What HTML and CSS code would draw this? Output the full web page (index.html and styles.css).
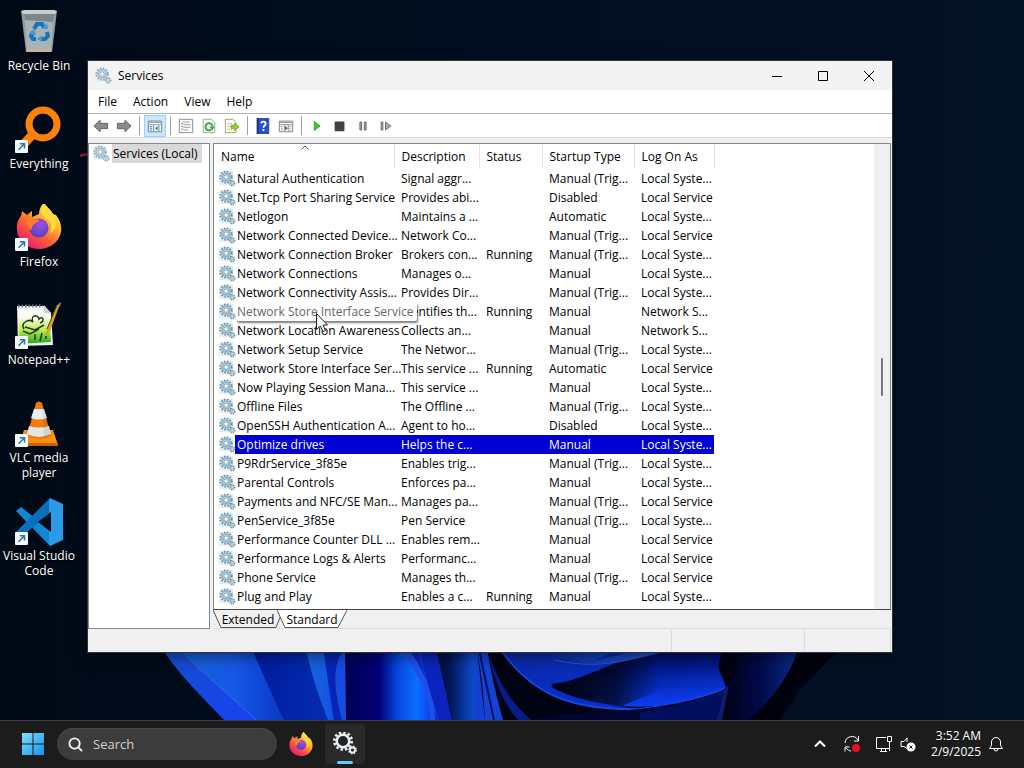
FILE: index.html
```html
<!DOCTYPE html>
<html lang="en">
<head>
    <meta charset="UTF-8">
    <meta name="viewport" content="width=device-width, initial-scale=1.0">
    <title>Services</title>
    <link rel="stylesheet" href="styles.css">
</head>
<body>
    <!-- Shared icons -->
    <svg class="defs" aria-hidden="true">
        <symbol id="gear" viewBox="0 0 18 18">
            <rect x="0" y="1" width="15" height="15" fill="#e3eff5"/>
            <circle cx="7.5" cy="7.5" r="6" fill="none" stroke="#6a8da1" stroke-width="2" stroke-dasharray="1.7 1.45"/>
            <circle cx="7.5" cy="7.5" r="4.2" fill="#cfe3ef" stroke="#93b6c9" stroke-width="2"/>
            <circle cx="7.5" cy="7.5" r="2.4" fill="#f6fbfd" stroke="#66899c" stroke-width=".8"/>
            <circle cx="14" cy="14" r="2.6" fill="#dceaf1" stroke="#6a8da1" stroke-width="1.6" stroke-dasharray="1.3 .9"/>
            <circle cx="14" cy="14" r="1.2" fill="#fff" stroke="#7497aa" stroke-width=".8"/>
        </symbol>
        <symbol id="shortcut" viewBox="0 0 13 13">
            <rect width="13" height="13" rx="1" fill="#f5f9fc"/>
            <path d="M3.5 9.8 9 4.2M4.8 3.7h4.7v4.7" fill="none" stroke="#2a76ae" stroke-width="1.5"/>
        </symbol>
        <symbol id="firefox" viewBox="0 0 46 46">
            <defs>
                <linearGradient id="fx1" x1=".85" y1=".05" x2=".2" y2=".95">
                    <stop offset="0" stop-color="#fff44f"/>
                    <stop offset=".35" stop-color="#ffb02e"/>
                    <stop offset=".65" stop-color="#ff5a36"/>
                    <stop offset="1" stop-color="#e5177b"/>
                </linearGradient>
                <radialGradient id="fx2" cx=".6" cy=".3" r=".8">
                    <stop offset="0" stop-color="#a04ee8"/>
                    <stop offset="1" stop-color="#4a3fb8"/>
                </radialGradient>
            </defs>
            <path d="M28 0c2 3 7 7 9 11l3 1c4 5 6 11 5 17-2 10-11 17-22 17S2 39 1 28c-1-6 1-12 4-15l1-5 5 4c2-1 3-3 5-4v6l7-3c0-4 2-9 5-11z" fill="url(#fx1)"/>
            <circle cx="23" cy="25" r="9.500" fill="url(#fx2)"/>
            <path d="M5 13l6-1c3 0 5 2 7 4l5 1c-1 3-4 3-6 5-1 2-2 3-1 5-4-1-6-4-5-10z" fill="#ff7a2b"/>
            <path d="M28 0c-5 6-3 11 2 15 5 3 7 9 4 15 6-2 8-10 3-19-2-4-7-7-9-11z" fill="#ffdc3e"/>
        </symbol>
    </svg>

    <main class="desktop">
        <!-- Wallpaper bloom -->
        <svg class="wallpaper" viewBox="0 640 1024 80" preserveAspectRatio="none" aria-hidden="true">
            <defs>
                <linearGradient id="w1" x1="0" y1="0" x2="1" y2="1"><stop offset="0" stop-color="#1450c8"/><stop offset="1" stop-color="#1940f2"/></linearGradient>
                <linearGradient id="w2" x1="0" y1="0" x2="1" y2="0"><stop offset="0" stop-color="#1468d2"/><stop offset=".55" stop-color="#1657e6"/><stop offset="1" stop-color="#0a35c0"/></linearGradient>
                <linearGradient id="w3" x1="0" y1="0" x2="1" y2="0"><stop offset="0" stop-color="#001a9c"/><stop offset="1" stop-color="#052db0"/></linearGradient>
                <linearGradient id="w4" x1="0" y1="0" x2="1" y2="0"><stop offset="0" stop-color="#000052"/><stop offset=".4" stop-color="#000078"/><stop offset=".62" stop-color="#0648e0"/><stop offset=".85" stop-color="#0a70ff"/><stop offset="1" stop-color="#1040f0"/></linearGradient>
                <linearGradient id="w5" x1="0" y1="0" x2="1" y2="0"><stop offset="0" stop-color="#000934"/><stop offset=".3" stop-color="#001552"/><stop offset=".75" stop-color="#0d49ca"/><stop offset="1" stop-color="#163bd8"/></linearGradient>
                <linearGradient id="w6" x1="0" y1="0" x2=".3" y2="1"><stop offset="0" stop-color="#0b2a9c"/><stop offset="1" stop-color="#0a2ccc"/></linearGradient>
                <linearGradient id="w7" x1=".2" y1="0" x2=".4" y2="1"><stop offset="0" stop-color="#00042c"/><stop offset=".4" stop-color="#001478"/><stop offset="1" stop-color="#0c3cf0"/></linearGradient>
                <linearGradient id="w8" x1="0" y1="0" x2="1" y2="0"><stop offset="0" stop-color="#00020f"/><stop offset=".5" stop-color="#000a4a"/><stop offset="1" stop-color="#0b2c86"/></linearGradient>
                <linearGradient id="w9" x1="0" y1="0" x2="1" y2="0"><stop offset="0" stop-color="#0d2a9e"/><stop offset="1" stop-color="#1a5ad8"/></linearGradient>
                <linearGradient id="w10" x1="0" y1="0" x2="1" y2="0"><stop offset="0" stop-color="#00020c"/><stop offset=".6" stop-color="#00020c" stop-opacity=".7"/><stop offset="1" stop-color="#00020c" stop-opacity="0"/></linearGradient>
            </defs>
            <path d="M158 640 225 720H780L800 690 848 640z" fill="#000314"/>
            <path d="M155 640 165 653C180 675 200 695 224 720H262L185 640z" fill="url(#w1)"/>
            <path d="M172 640C205 675 230 695 256 720H288L250 640z" fill="url(#w2)"/>
            <path d="M248 640C262 672 272 695 284 720H330L308 640z" fill="url(#w3)"/>
            <path d="M174 643C205 676 230 695 256 720" fill="none" stroke="#2f6cf0"/>
            <path d="M304 640C310 670 318 695 328 720H347V640z" fill="url(#w2)"/>
            <path d="M322 640 326 668 334 720H350L346 640z" fill="#0724b4"/>
            <path d="M342 652C333 668 333 685 342 720H349L346 645z" fill="#164be0"/>
            <path d="M345 640 346 720H430C430 690 415 660 390 640z" fill="url(#w4)"/>
            <path d="M384 640C418 666 428 690 430 720H436C434 690 420 660 402 640z" fill="#1c50ee"/>
            <path d="M400 640C422 662 433 690 436 720H452L438 640z" fill="#0a23bc"/>
            <path d="M415 640 438 720" fill="none" stroke="#1744e4"/>
            <path d="M434 640 452 720H485L476 640z" fill="url(#w5)"/>
            <path d="M474 640C482 668 483 692 485 720H503C495 690 490 670 486 640z" fill="#1343d2"/>
            <path d="M477 640 494 720" fill="none" stroke="#000d64" stroke-width="2"/>
            <path d="M489 655C502 690 515 706 531 720H518C504 704 494 682 489 655z" fill="#091b86"/>
            <path d="M503 653C530 690 565 711 638 709 610 706 565 695 551 684 590 680 620 660 655 647L545 640z" fill="url(#w6)"/>
            <path d="M551 686C580 679 612 665 650 648L725 640 718 667 726 687C695 702 662 709 622 706 590 703 560 694 551 686z" fill="url(#w7)"/>
            <path d="M551 686C580 679 612 665 650 648L660 690 622 706C590 703 560 694 551 686z" fill="url(#w10)"/>
            <path d="M545 652C575 666 605 669 670 650L640 649C625 654 610 657 590 662L618 650z" fill="url(#w9)"/>
            <path d="M503 653C530 690 565 711 640 709 675 706 700 699 726 688" fill="none" stroke="#1b46dd" stroke-width="2"/>
            <path d="M555 660C590 668 620 665 670 648" fill="none" stroke="#2457d6"/>
            <path d="M575 713C630 712 690 705 725 689L716 720H530z" fill="#00062f"/>
            <path d="M640 712C680 707 705 698 725 689L716 720H640z" fill="#00105e"/>
            <path d="M724 688C722 701 719 712 716 720H722L729 686z" fill="#101a70"/>
            <path d="M729 686 745 640H798C797 672 776 698 748 720H722z" fill="url(#w8)"/>
            <path d="M798 650C790 676 770 702 748 720H778L795 685 835 652z" fill="#00020c"/>
        </svg>

        <nav class="shortcuts" aria-label="Desktop">
            <a class="shortcut" href="#">
                <svg viewBox="0 0 48 48">
                    <path d="M6 3H42L37 44H11z" fill="#8f999f"/>
                    <path d="M9 6H39L36 43H12z" fill="#abb2b6"/>
                    <path d="M9 6H39L38 14 10 12z" fill="#7e868b"/>
                    <path d="M6 3 9 2H39L42 3 40 6H8z" fill="#c9ced1"/>
                    <path d="M11 41H37L36 44H12z" fill="#c9b0a7"/>
                    <g fill="none" stroke="#1773bd" stroke-width="4">
                        <path d="M19 21 22 16H27L29 20"/>
                        <path d="M32 24 33 28 30 31H27"/>
                        <path d="M21 31H18L16 28 18 24"/>
                    </g>
                    <path d="M26 21H33L32 15zM27 27V34L22 31zM14 26 19 21 21 27z" fill="#3f98d8"/>
                </svg>
                <span>Recycle Bin</span>
            </a>
            <a class="shortcut" href="#">
                <svg viewBox="0 0 48 48">
                    <circle cx="28" cy="18" r="14" fill="none" stroke="#ff8208" stroke-width="7"/>
                    <path d="M19 27 7 40" stroke="#ff8208" stroke-width="9"/>
                    <use href="#shortcut" x="0" y="34" width="13" height="13"/>
                </svg>
                <span>Everything</span>
            </a>
            <a class="shortcut" href="#">
                <svg viewBox="0 0 48 48">
                    <use href="#firefox" x="1" y="-1" width="46" height="46"/>
                    <use href="#shortcut" x="0" y="34" width="13" height="13"/>
                </svg>
                <span>Firefox</span>
            </a>
            <a class="shortcut" href="#">
                <svg viewBox="0 0 48 48">
                    <defs><linearGradient id="np" x1="0" y1="0" x2="0" y2="1"><stop offset=".2" stop-color="#fafdf4"/><stop offset=".6" stop-color="#b9ec4c"/><stop offset="1" stop-color="#1fa51b"/></linearGradient></defs>
                    <path d="M2 4H29L36 11 38 43 3 44z" fill="#f4f6f5"/>
                    <path d="M3 8H29L35 14 36 40 4 42z" fill="url(#np)"/>
                    <path d="M3 4H28" stroke="#667a83" stroke-width="3" stroke-dasharray="1.500 2"/>
                    <path d="M29 3V11H36z" fill="#c7d1d5"/>
                    <path d="M9 27C5 21 14 16 18 20 15 13 23 12 24 17 27 13 31 19 25 21M10 25 20 28 29 23M8 29 15 32 24 27M20 38V32M25 39 27 31M31 37V34" fill="none" stroke="#24361a" stroke-width="1.500"/>
                    <circle cx="20" cy="17" r="2" fill="#fff"/>
                    <path d="M45 2 35 29 31 34 32 27 42 3z" fill="#d6a21f"/>
                    <path d="M42 3 32 27" stroke="#52450b" stroke-width="1"/>
                    <path d="M43 2 46 0 45 5z" fill="#9c7783"/>
                    <use href="#shortcut" x="0" y="34" width="13" height="13"/>
                </svg>
                <span>Notepad++</span>
            </a>
            <a class="shortcut" href="#">
                <svg viewBox="0 0 48 48">
                    <path d="M9 30H38L43 45H4z" fill="#f59112"/>
                    <path d="M4 43H43V46H4z" fill="#c96205"/>
                    <path d="M21 3Q24 0 27 3L36 36Q24 42 12 36z" fill="#f47a0c"/>
                    <path d="M19 9 29 9 32 18Q24 21 16 18z" fill="#e9eeee"/>
                    <path d="M14 26Q24 29 34 26L36 34Q24 40 12 34z" fill="#e1e7e7"/>
                    <path d="M27 3 36 35 29 38z" fill="#000" opacity=".08"/>
                    <use href="#shortcut" x="0" y="34" width="13" height="13"/>
                </svg>
                <span>VLC media player</span>
            </a>
            <a class="shortcut" href="#">
                <svg viewBox="0 0 48 48">
                    <path d="M1 13 6 9 39 35V46L35 48z" fill="#1287d6"/>
                    <path d="M1 34 35 0 39 12 6 39z" fill="#0a6fbd"/>
                    <path d="M35 0 48 6V42L35 48 34 45V3z" fill="#2b9be8"/>
                    <path d="M36 14V34L23 24z" fill="#020c19"/>
                    <use href="#shortcut" x="0" y="34" width="13" height="13"/>
                </svg>
                <span>Visual Studio Code</span>
            </a>
        </nav>

        <svg class="mark" viewBox="0 0 8 4" aria-hidden="true"><path d="M0 3 4 1.500H8"/></svg>

        <section class="window" aria-label="Services">
            <header class="titlebar">
                <svg class="gear faded"><use href="#gear"/></svg>
                <h1>Services</h1>
                <div class="window-buttons">
                    <button aria-label="Minimize"><svg viewBox="0 0 12 12"><path d="M1 6.500H11"/></svg></button>
                    <button aria-label="Maximize"><svg viewBox="0 0 12 12"><path d="M1.500 1.500H10.500V10.500H1.500z"/></svg></button>
                    <button aria-label="Close"><svg viewBox="0 0 12 12"><path d="M1 1 11 11M11 1 1 11"/></svg></button>
                </div>
            </header>

            <div class="menubar">
                <button>File</button>
                <button>Action</button>
                <button>View</button>
                <button>Help</button>
            </div>

            <div class="toolbar">
                <button aria-label="Back"><svg viewBox="0 0 18 18"><path d="M1 9 8 2.500V6H16.500V12H8V15.500z" fill="#8b8b8b" stroke="#5f5f5f"/></svg></button>
                <button aria-label="Forward"><svg viewBox="0 0 18 18"><path d="M17 9 10 2.500V6H1.500V12H10V15.500z" fill="#8b8b8b" stroke="#5f5f5f"/></svg></button>
                <i class="divider"></i>
                <button class="pressed" aria-label="Show console tree">
                    <svg viewBox="0 0 18 18"><path d="M1.500 3.500H16.500V15.500H1.500z" fill="#fff" stroke="#687b87"/><path d="M2 5H16M2 7.500H16" stroke="#7995a6"/><path d="M3 9.500H6M3 11.500H6M3 13.500H6" stroke="#3479a8"/><path d="M7.500 8V15M13.500 8V15" stroke="#687b87"/><path d="M12 9V14L9 11.500z" fill="#257bae"/></svg>
                </button>
                <i class="divider"></i>
                <button aria-label="Properties">
                    <svg viewBox="0 0 18 18"><path d="M1.500 1.500H16.500V16.500H1.500z" fill="#f7f7f7" stroke="#858585"/><path d="M5 4.500H13M6 7.500H14M6 10.500H14M6 13.500H11" stroke="#999"/><path d="M4 6.500H5.500M4 9.500H5.500M4 12.500H5.500" stroke="#555"/></svg>
                </button>
                <button aria-label="Refresh">
                    <svg viewBox="0 0 18 18"><path d="M2.500 1.500H12L15.500 5V16.500H2.500z" fill="#fbfdfb" stroke="#91a091"/><path d="M12 12.500A4 4 0 1 1 13 9.500" fill="none" stroke="#2fa13c" stroke-width="2"/><path d="M9.500 9.500H15.500L13 13.500z" fill="#2fa13c"/></svg>
                </button>
                <button aria-label="Export list">
                    <svg viewBox="0 0 18 18"><path d="M1.500 1.500H10L13.500 5V16.500H1.500z" fill="#fdfce9" stroke="#9a9a80"/><path d="M4 6.500H10M4 9.500H9M4 12.500H9" stroke="#89896b" stroke-dasharray="1 1"/><path d="M8 8.500H12V6L17 10 12 14V11.500H8z" fill="#9bd82c" stroke="#66a81c"/></svg>
                </button>
                <i class="divider"></i>
                <button aria-label="Help">
                    <svg viewBox="0 0 18 18"><path d="M2 0H16V18H2z" fill="#2e4fc0"/><path d="M2 0H4V18H2z" fill="#17318e"/><path d="M7 6Q7 4 9.500 4T12 6.500C12 8.500 9.500 8.500 9.500 11M9.500 12.500V14.500" fill="none" stroke="#fff" stroke-width="2"/></svg>
                </button>
                <button aria-label="Show action pane">
                    <svg viewBox="0 0 18 18"><path d="M1.500 3.500H16.500V15.500H1.500z" fill="#fff" stroke="#777"/><path d="M2 5H16M2 7.500H16" stroke="#888"/><path d="M3 9.500H6M3 11.500H6M3 13.500H6M12 9.500H15M12 11.500H15M12 13.500H15" stroke="#aaa"/><path d="M7.500 8V15M11.500 8V15" stroke="#888"/><path d="M8 9 11 11.500 8 14z" fill="#555"/></svg>
                </button>
                <i class="divider"></i>
                <button aria-label="Start service"><svg viewBox="0 0 18 18"><path d="M6 4V14L12.500 9z" fill="#36cf2a" stroke="#22a51b"/></svg></button>
                <button aria-label="Stop service"><svg viewBox="0 0 18 18"><rect x="3" y="4" width="11" height="11" rx="1" fill="#414141"/></svg></button>
                <button aria-label="Pause service"><svg viewBox="0 0 18 18"><path d="M5.500 4.500H7.500V13.500H5.500zM10.500 4.500H12.500V13.500H10.500z" fill="#999" stroke="#666"/></svg></button>
                <button aria-label="Restart service"><svg viewBox="0 0 18 18"><path d="M3.500 4.500H5.500V13.500H3.500zM8.500 4.500V13.500L14.500 9z" fill="#aaa" stroke="#666"/></svg></button>
            </div>

            <div class="panes">
                <aside class="tree">
                    <button class="tree-item"><svg class="gear faded"><use href="#gear"/></svg><span>Services (Local)</span></button>
                </aside>

                <div class="content">
                    <div class="list">
                        <table>
                            <colgroup>
                                <col class="col-name"><col class="col-desc"><col class="col-status"><col class="col-startup"><col class="col-logon">
                            </colgroup>
                            <thead>
                                <tr>
                                    <th>Name<svg class="sort" viewBox="0 0 8 5"><path d="M.5 4.500 4 1 7.500 4.500"/></svg></th>
                                    <th>Description</th><th>Status</th><th>Startup Type</th><th>Log On As</th>
                                </tr>
                            </thead>
                            <tbody>
                                <tr><td><svg class="gear"><use href="#gear"/></svg><span>Natural Authentication</span></td><td>Signal aggr...</td><td></td><td>Manual (Trig...</td><td>Local Syste...</td></tr>
                                <tr><td><svg class="gear"><use href="#gear"/></svg><span>Net.Tcp Port Sharing Service</span></td><td>Provides abi...</td><td></td><td>Disabled</td><td>Local Service</td></tr>
                                <tr><td><svg class="gear"><use href="#gear"/></svg><span>Netlogon</span></td><td>Maintains a ...</td><td></td><td>Automatic</td><td>Local Syste...</td></tr>
                                <tr><td><svg class="gear"><use href="#gear"/></svg><span>Network Connected Device...</span></td><td>Network Co...</td><td></td><td>Manual (Trig...</td><td>Local Service</td></tr>
                                <tr><td><svg class="gear"><use href="#gear"/></svg><span>Network Connection Broker</span></td><td>Brokers con...</td><td>Running</td><td>Manual (Trig...</td><td>Local Syste...</td></tr>
                                <tr><td><svg class="gear"><use href="#gear"/></svg><span>Network Connections</span></td><td>Manages o...</td><td></td><td>Manual</td><td>Local Syste...</td></tr>
                                <tr><td><svg class="gear"><use href="#gear"/></svg><span>Network Connectivity Assis...</span></td><td>Provides Dir...</td><td></td><td>Manual (Trig...</td><td>Local Syste...</td></tr>
                                <tr>
                                    <td>
                                        <svg class="gear"><use href="#gear"/></svg>
                                        <div class="tooltip" role="tooltip">Network Store Interface Service
                                            <svg class="cursor" viewBox="0 0 12 19"><path d="M.5.5V16.500L4.300 13 7 18.500 9.500 17.500 7 12H11.500z" fill="#fff" stroke="#222"/></svg>
                                        </div>
                                    </td>
                                    <td>Identifies th...</td><td>Running</td><td>Manual</td><td>Network S...</td>
                                </tr>
                                <tr><td><svg class="gear"><use href="#gear"/></svg><span>Network Location Awareness</span></td><td>Collects an...</td><td></td><td>Manual</td><td>Network S...</td></tr>
                                <tr><td><svg class="gear"><use href="#gear"/></svg><span>Network Setup Service</span></td><td>The Networ...</td><td></td><td>Manual (Trig...</td><td>Local Syste...</td></tr>
                                <tr><td><svg class="gear"><use href="#gear"/></svg><span>Network Store Interface Ser...</span></td><td>This service ...</td><td>Running</td><td>Automatic</td><td>Local Service</td></tr>
                                <tr><td><svg class="gear"><use href="#gear"/></svg><span>Now Playing Session Mana...</span></td><td>This service ...</td><td></td><td>Manual</td><td>Local Syste...</td></tr>
                                <tr><td><svg class="gear"><use href="#gear"/></svg><span>Offline Files</span></td><td>The Offline ...</td><td></td><td>Manual (Trig...</td><td>Local Syste...</td></tr>
                                <tr><td><svg class="gear"><use href="#gear"/></svg><span>OpenSSH Authentication A...</span></td><td>Agent to ho...</td><td></td><td>Disabled</td><td>Local Syste...</td></tr>
                                <tr class="selected"><td><svg class="gear"><use href="#gear"/></svg><span>Optimize drives</span></td><td>Helps the c...</td><td></td><td>Manual</td><td>Local Syste...</td></tr>
                                <tr><td><svg class="gear"><use href="#gear"/></svg><span>P9RdrService_3f85e</span></td><td>Enables trig...</td><td></td><td>Manual (Trig...</td><td>Local Syste...</td></tr>
                                <tr><td><svg class="gear"><use href="#gear"/></svg><span>Parental Controls</span></td><td>Enforces pa...</td><td></td><td>Manual</td><td>Local Syste...</td></tr>
                                <tr><td><svg class="gear"><use href="#gear"/></svg><span>Payments and NFC/SE Man...</span></td><td>Manages pa...</td><td></td><td>Manual (Trig...</td><td>Local Service</td></tr>
                                <tr><td><svg class="gear"><use href="#gear"/></svg><span>PenService_3f85e</span></td><td>Pen Service</td><td></td><td>Manual (Trig...</td><td>Local Syste...</td></tr>
                                <tr><td><svg class="gear"><use href="#gear"/></svg><span>Performance Counter DLL ...</span></td><td>Enables rem...</td><td></td><td>Manual</td><td>Local Service</td></tr>
                                <tr><td><svg class="gear"><use href="#gear"/></svg><span>Performance Logs &amp; Alerts</span></td><td>Performanc...</td><td></td><td>Manual</td><td>Local Service</td></tr>
                                <tr><td><svg class="gear"><use href="#gear"/></svg><span>Phone Service</span></td><td>Manages th...</td><td></td><td>Manual (Trig...</td><td>Local Service</td></tr>
                                <tr><td><svg class="gear"><use href="#gear"/></svg><span>Plug and Play</span></td><td>Enables a c...</td><td>Running</td><td>Manual</td><td>Local Syste...</td></tr>
                            </tbody>
                        </table>
                        <div class="scrollbar"><div class="thumb"></div></div>
                    </div>

                    <div class="tabs">
                        <button class="tab"><svg viewBox="0 0 70 18" preserveAspectRatio="none"><path d="M0 0 8 17.500H63L70 0" fill="#f0f0f0"/></svg><span>Extended</span></button>
                        <button class="tab active"><svg viewBox="0 0 70 18" preserveAspectRatio="none"><path d="M0 0 8 17.500H61L70 0" fill="#fff"/></svg><span>Standard</span></button>
                    </div>
                </div>
            </div>

            <footer class="statusbar"><span></span><span></span><span></span></footer>
        </section>
    </main>

    <footer class="taskbar">
        <button class="task" aria-label="Start">
            <svg class="start" viewBox="0 0 24 24">
                <defs><linearGradient id="win" x1="0" y1="0" x2="1" y2="1"><stop offset="0" stop-color="#7fe0fb"/><stop offset="1" stop-color="#1592ea"/></linearGradient></defs>
                <path d="M1 1H11.500V11.500H1zM12.500 1H23V11.500H12.500zM1 12.500H11.500V23H1zM12.500 12.500H23V23H12.500z" fill="url(#win)"/>
            </svg>
        </button>
        <label class="search">
            <svg viewBox="0 0 16 16"><circle cx="7" cy="7" r="5.500"/><path d="M11 11 15 15"/></svg>
            <input type="text" placeholder="Search" aria-label="Search">
        </label>
        <button class="task" aria-label="Firefox"><svg class="start"><use href="#firefox"/></svg></button>
        <button class="task running" aria-label="Services">
            <svg class="start" viewBox="0 0 24 24">
                <circle cx="10" cy="9" r="8.500" fill="none" stroke="#e2edf2" stroke-width="3" stroke-dasharray="2.450 2"/>
                <circle cx="10" cy="9" r="6.200" fill="#222" stroke="#e8f2f6" stroke-width="2.500"/>
                <circle cx="19.500" cy="18" r="3.700" fill="none" stroke="#dfeaf0" stroke-width="1.500" stroke-dasharray="1.600 1.300"/>
                <circle cx="19.500" cy="18" r="2.500" fill="#222" stroke="#e8f2f6" stroke-width="1.800"/>
            </svg>
        </button>
        <div class="tray">
            <button aria-label="Show hidden icons"><svg viewBox="0 0 18 18"><path d="M4 11.500 9 6.500 14 11.500" stroke-width="2"/></svg></button>
            <button aria-label="Windows Update"><svg viewBox="0 0 18 18"><path d="M2 8A7 7 0 0 1 15 5M15.500 1V6H11M2 12V16.500M2 12H6.500M3 13C5 15 6 16 8 16"/><circle cx="13" cy="13" r="4" fill="#e81123" stroke="none"/></svg></button>
            <div class="tray-group">
                <button aria-label="Network"><svg viewBox="0 0 18 18"><path d="M11 2.500H1.500V13.500H14.500V8M5 16.500H12M6.500 14V16M10.500 14V16M12.500 1.500H16.500V6.500H12.500zM14.500 7V16"/></svg></button>
                <button aria-label="Volume muted"><svg viewBox="0 0 18 18"><path d="M8 13.500 5 11.500H2V6.500H5L8 3V7"/><circle cx="12" cy="12" r="4.500" fill="#fff" stroke="none"/><path d="M10.500 10.500 13.500 13.500M13.500 10.500 10.500 13.500" stroke="#1c1c1c"/></svg></button>
            </div>
            <div class="tray-group">
                <button class="clock"><time>3:52 AM</time><time>2/9/2025</time></button>
                <button aria-label="Notifications"><svg viewBox="0 0 18 18"><path d="M2.500 13.500H15.500L13.500 10.500V7A4.500 4.500 0 0 0 4.500 7V10.500zM7 14A2 2 0 0 0 11 14"/></svg></button>
            </div>
        </div>
    </footer>
</body>
</html>
```
FILE: styles.css
```css
* {
    box-sizing: border-box;
}
body {
    margin: 0;
    height: 100vh;
    display: flex;
    flex-direction: column;
    overflow: hidden;
    font: 12px/15px "Open Sans", "Noto Sans", sans-serif;
    color: #000;
}
button {
    padding: 0;
    border: none;
    background: none;
    font: inherit;
    color: inherit;
}
.defs {
    position: absolute;
    width: 0;
    height: 0;
}

/* Desktop */
.desktop {
    position: relative;
    flex: 1;
    min-height: 0;
    background: linear-gradient(90deg, #000a17, #020e20 50%, #031124);
}
.wallpaper {
    position: absolute;
    left: 0;
    bottom: 0;
    width: 100%;
    height: 80px;
}
.mark {
    position: absolute;
    top: 153px;
    left: 80px;
    width: 8px;
    height: 4px;
    fill: none;
    stroke: #c2185b;
    stroke-width: 2;
}
.shortcuts {
    position: relative;
    width: 78px;
    padding-top: 8px;
}
.shortcut {
    display: flex;
    flex-direction: column;
    align-items: center;
    gap: 2px;
    height: 98px;
    color: #fff;
    text-align: center;
    text-decoration: none;
    text-shadow: 0 1px 2px #000;
}
.shortcut svg {
    width: 48px;
    height: 48px;
    flex: none;
}

/* Window */
.window {
    position: absolute;
    top: 61px;
    right: 132px;
    bottom: 68px;
    left: 88px;
    display: flex;
    flex-direction: column;
    background: #f0f0f0;
    box-shadow: 0 0 0 1px #30343a, 0 4px 14px rgba(0, 0, 0, 0.5);
}
.gear {
    width: 17px;
    height: 17px;
    flex: none;
}
.gear.faded {
    opacity: 0.8;
}
.titlebar {
    display: flex;
    align-items: center;
    gap: 6px;
    height: 29px;
    padding-left: 7px;
    background: #f3f3f3;
}
.titlebar h1 {
    margin: 0;
    font-size: 12px;
    font-weight: 400;
}
.window-buttons {
    display: flex;
    margin-left: auto;
}
.window-buttons button {
    width: 46px;
    height: 28px;
}
.window-buttons svg {
    display: block;
    width: 12px;
    height: 12px;
    margin: auto;
    fill: none;
    stroke: #000;
}
.menubar {
    display: flex;
    height: 23px;
    padding-left: 2px;
    background: #fff;
}
.menubar button {
    padding: 0 8px;
}
.toolbar {
    display: flex;
    align-items: center;
    gap: 1px;
    height: 25px;
    padding-left: 2px;
    background: #fff;
    border-top: 1px solid #b4b4b4;
    border-bottom: 1px solid #dcdcdc;
}
.toolbar button {
    width: 22px;
    height: 22px;
}
.toolbar button.pressed {
    background: #cce8ff;
    border: 1px solid #99d1ff;
}
.toolbar svg {
    width: 16px;
    height: 16px;
    display: block;
    margin: auto;
}
.divider {
    width: 1px;
    height: 19px;
    margin: 0 3px;
    background: #a0a0a0;
}

/* Panes */
.panes {
    flex: 1;
    min-height: 0;
    display: flex;
    gap: 3px;
    padding: 5px 1px 1px 0;
}
.tree {
    width: 122px;
    padding: 0 4px;
    background: #fff;
    border: 1px solid #828790;
}
.tree-item {
    display: flex;
    align-items: center;
    gap: 2px;
    height: 19px;
    white-space: nowrap;
}
.tree-item span {
    padding: 2px 4px 2px 1px;
    background: #d9d9d9;
}
.content {
    flex: 1;
    min-width: 0;
    display: flex;
    flex-direction: column;
}
.list {
    flex: 1;
    min-height: 0;
    display: flex;
    justify-content: space-between;
    overflow: hidden;
    background: #fff;
    border: 1px solid #828790;
    border-bottom-color: #444;
}
table {
    width: 500px;
    align-self: flex-start;
    table-layout: fixed;
    border-collapse: collapse;
}
.col-name { width: 180px; }
.col-desc { width: 85px; }
.col-status { width: 63px; }
.col-startup { width: 92px; }
.col-logon { width: 80px; }
th {
    position: relative;
    height: 25px;
    padding: 0 7px;
    border-right: 1px solid #e5e5e5;
    font-weight: 400;
    text-align: left;
}
.sort {
    position: absolute;
    top: 1px;
    left: 87px;
    width: 8px;
    height: 5px;
    fill: none;
    stroke: #555;
}
td {
    height: 19px;
    padding: 0 0 0 7px;
    white-space: nowrap;
}
td:first-child {
    position: relative;
    display: flex;
    align-items: center;
    padding-left: 5px;
}
td:first-child span {
    flex: 1;
    margin-left: -1px;
    padding-left: 2px;
    line-height: 19px;
}
.selected td:not(:first-child),
.selected span {
    background: #0000d7;
    color: #fff;
}
.tooltip {
    position: absolute;
    left: 22px;
    top: 0;
    z-index: 1;
    padding: 2px 4px 2px 1px;
    background: #fff;
    border-radius: 2px;
    box-shadow: 1px 2px 2px rgba(0, 0, 0, 0.5);
    color: #666;
}
.cursor {
    position: absolute;
    left: 80px;
    top: 11px;
    width: 12px;
    height: 19px;
}
.scrollbar {
    width: 16px;
    background: #f0f0f0;
}
.thumb {
    width: 2px;
    height: 38px;
    margin: 214px auto 0;
    border-radius: 1px;
    background: #777;
}
.tabs {
    display: flex;
    height: 19px;
    border-bottom: 1px solid #dcdcdc;
}
.tab {
    position: relative;
    width: 70px;
    height: 18px;
}
.tab.active {
    margin-left: -6px;
}
.tab svg {
    position: absolute;
    inset: 0;
    width: 100%;
    height: 100%;
    stroke: #555;
}
.tab span {
    position: relative;
}
.statusbar {
    display: flex;
    height: 22px;
    gap: 2px;
    padding-right: 1px;
}
.statusbar span {
    width: 84px;
    border-right: 1px solid #dcdcdc;
}
.statusbar span:first-child {
    flex: 1;
}
.statusbar span:nth-child(2) {
    width: 131px;
}

/* Taskbar */
.taskbar {
    display: flex;
    align-items: center;
    height: 48px;
    padding: 0 19px 0 13px;
    background: #1c1c1c;
    box-shadow: inset 0 1px #3a3c40;
    color: #fff;
}
.task {
    position: relative;
    width: 40px;
    height: 40px;
    margin-right: 4px;
    border-radius: 4px;
}
.start {
    width: 24px;
    height: 24px;
    vertical-align: middle;
}
.running {
    background: #292929;
}
.running::after {
    content: "";
    position: absolute;
    left: 12px;
    bottom: 0;
    width: 16px;
    height: 3px;
    border-radius: 2px;
    background: #60cdff;
}
.search {
    display: flex;
    align-items: center;
    gap: 10px;
    width: 220px;
    height: 32px;
    margin-right: 4px;
    padding: 0 11px;
    border-radius: 16px;
    background: #3c3c3c;
    box-shadow: inset 0 1px #484848;
}
.search svg {
    width: 15px;
    height: 15px;
    flex: none;
    fill: none;
    stroke: #eee;
    stroke-width: 2;
}
.search input {
    flex: 1;
    min-width: 0;
    padding: 0;
    border: none;
    outline: none;
    background: none;
    font: 13px "Open Sans", "Noto Sans", sans-serif;
    color: #fff;
}
.search input::placeholder {
    color: #d0d0d0;
    opacity: 1;
}
.tray {
    display: flex;
    align-items: center;
    gap: 14px;
    margin-left: auto;
}
.tray-group {
    display: flex;
    align-items: center;
    gap: 6px;
}
.tray svg {
    display: block;
    width: 18px;
    height: 18px;
    fill: none;
    stroke: #fff;
}
.clock {
    text-align: right;
    line-height: 16px;
}
.clock time {
    display: block;
}
```
